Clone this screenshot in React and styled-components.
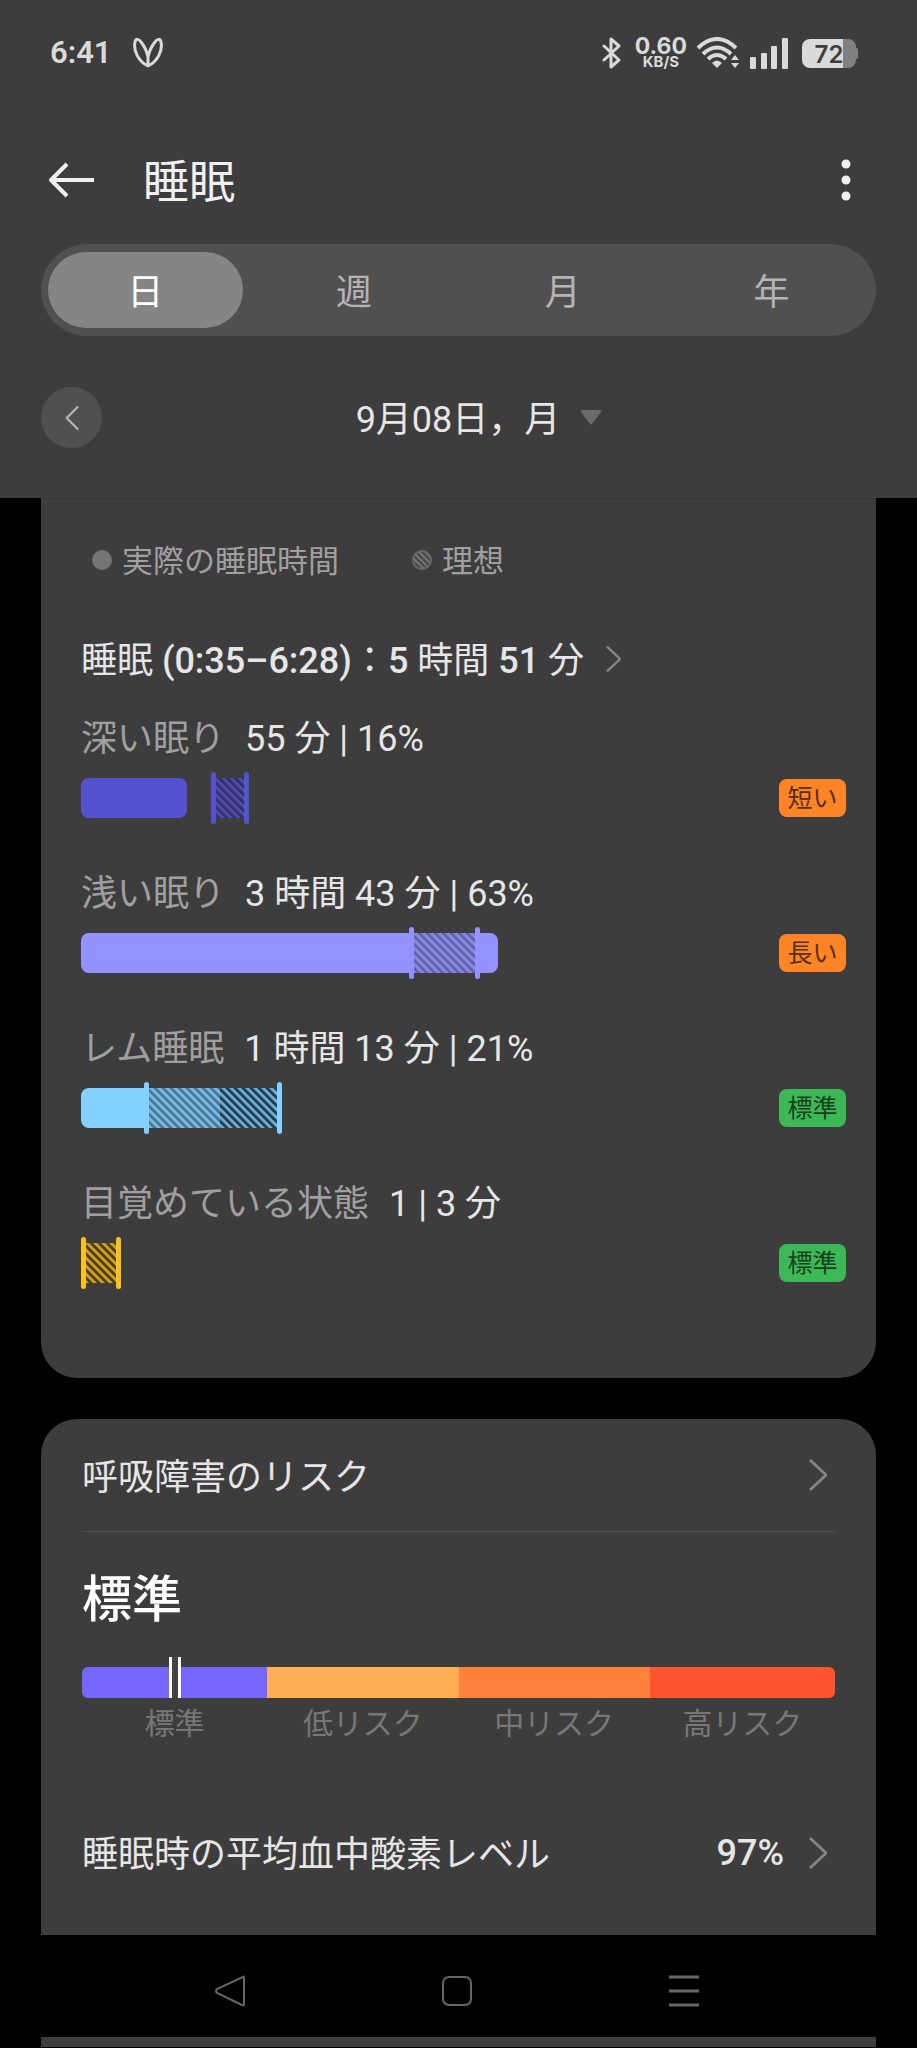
import React from "react";
import styled, { createGlobalStyle } from "styled-components";

const GlobalStyle = createGlobalStyle`
  * {
    box-sizing: border-box;
  }
  body {
    margin: 0;
    background: #000000;
    color: #e6e6e6;
    font-family: Roboto, "Noto Sans CJK JP", sans-serif;
    font-size: 36px;
    line-height: 52px;
  }
  button,
  a {
    font: inherit;
    color: inherit;
    text-decoration: none;
    border: none;
    background: none;
    padding: 0;
    cursor: pointer;
  }
  h1, h2, p {
    margin: 0;
    padding: 0;
    font-weight: 400;
  }
  svg {
    display: block;
    flex: none;
  }
`;

const STAGES = [
  {
    id: "deep",
    name: "深い眠り",
    value: "55 分 | 16%",
    color: "#5552d0",
    under: "#33325c",
    bar: 106,
    ideal: [130, 163],
    badge: "短い",
  },
  {
    id: "light",
    name: "浅い眠り",
    value: "3 時間 43 分 | 63%",
    color: "#9492fe",
    under: "#444368",
    bar: 417,
    ideal: [328, 394],
    badge: "長い",
  },
  {
    id: "rem",
    name: "レム睡眠",
    value: "1 時間 13 分 | 21%",
    color: "#84d0ff",
    under: "#243a4a",
    bar: 139,
    ideal: [63, 196],
    badge: "標準",
    ok: true,
  },
  {
    id: "awake",
    name: "目覚めている状態",
    value: "1 | 3 分",
    color: "#fcc21c",
    under: "#4a3c18",
    bar: 0,
    ideal: [0, 35],
    badge: "標準",
    ok: true,
  },
];

const RISKS = [
  { name: "標準", color: "#7466ff", size: 185 },
  { name: "低リスク", color: "#ffad52", size: 191 },
  { name: "中リスク", color: "#ff813a", size: 191 },
  { name: "高リスク", color: "#ff5430", size: 185 },
];

const Chevron = ({ width = 20, height = 34, left }) => (
  <svg width={width} height={height} viewBox="0 0 20 34" fill="none" stroke="currentColor" strokeWidth="3" strokeLinejoin="round">
    <path d={left ? "M18 2 3 17 18 32" : "M2 2 17 16Q18 17 17 18L2 32"} />
  </svg>
);

const StageChart = ({ id, color, under, bar, ideal }) => {
  const [from, to] = ideal;
  const hatch = `hatch-${id}`;
  const inBar = Math.max(0, Math.min(bar, to) - from - 3);
  return (
    <svg width="424" height="52" aria-hidden="true">
      <defs>
        <pattern id={hatch} width="8" height="8" patternUnits="userSpaceOnUse">
          <path d="M-2 -2 10 10M-2 6 2 10M6 -2 10 2" stroke={color} strokeWidth="3" strokeOpacity="0.75" />
        </pattern>
      </defs>
      {bar > 0 && <rect y="6" width={bar} height="40" rx="8" fill={color} />}
      <rect x={from + 3} y="6" width={to - from} height="40" fill={under} />
      {inBar > 0 && <rect x={from + 3} y="6" width={inBar} height="40" fill={color} fillOpacity="0.4" />}
      <rect x={from + 3} y="6" width={to - from} height="40" fill={`url(#${hatch})`} />
      <rect x={from} width="5" height="52" rx="2.5" fill={color} />
      <rect x={to} width="5" height="52" rx="2.5" fill={color} />
    </svg>
  );
};

const App = () => {
  return (
    <Page>
      <GlobalStyle />
      <Header>
        <StatusBar>
          <Clock>6:41</Clock>
          <svg width="32" height="32" viewBox="0 0 32 32" fill="none" stroke="#dadada" strokeWidth="3" strokeLinejoin="round">
            <path d="M16 29C7 25 1 14 3 5 4 1 7 2 9 5 13 10 15 15 16 20 17 15 19 10 23 5 25 2 28 1 29 5 31 14 25 25 16 29ZM16 18V29" />
          </svg>
          <StatusIcons>
            <svg width="19" height="32" viewBox="0 0 19 32" fill="none" stroke="#dadada" strokeWidth="3" strokeLinejoin="round" strokeLinecap="round">
              <path d="M2 9 17 23 9 30V2L17 9 2 23" />
            </svg>
            <Speed>
              <b>0.60</b>
              <span>KB/S</span>
            </Speed>
            <svg width="44" height="32" viewBox="0 0 44 32" fill="none" stroke="#dadada" strokeWidth="4">
              <path d="M2 11Q21-7 40 11M7 17Q21 4 35 17M12 22Q21 14 30 22" />
              <path d="M21 31 16 26Q21 21 26 26Z" fill="#dadada" stroke="none" />
              <path d="M35 23 39 18 43 23ZM35 26 39 31 43 26Z" fill="#dadada" stroke="none" />
            </svg>
            <svg width="40" height="32" viewBox="0 0 40 32" fill="#dadada">
              <rect x="1" y="20" width="6" height="12" rx="1" />
              <rect x="12" y="16" width="6" height="16" rx="1" />
              <rect x="22" y="9" width="6" height="23" rx="1" />
              <rect x="33" y="1" width="6" height="31" rx="1" />
            </svg>
            <Battery>72</Battery>
          </StatusIcons>
        </StatusBar>
        <TitleBar>
          <IconButton type="button" aria-label="戻る">
            <svg width="48" height="36" viewBox="0 0 48 36" fill="none" stroke="#f0f0f0" strokeWidth="4">
              <path d="M46 18H4M19 2 3 18 19 34" strokeLinejoin="round" />
            </svg>
          </IconButton>
          <Title>睡眠</Title>
          <IconButton type="button" aria-label="メニュー">
            <svg width="10" height="42" viewBox="0 0 10 42" fill="#f0f0f0">
              <circle cx="5" cy="5" r="4.5" />
              <circle cx="5" cy="21" r="4.5" />
              <circle cx="5" cy="37" r="4.5" />
            </svg>
          </IconButton>
        </TitleBar>
        <Tabs>
          <Tab type="button" $active>日</Tab>
          <Tab type="button">週</Tab>
          <Tab type="button">月</Tab>
          <Tab type="button">年</Tab>
        </Tabs>
        <DateRow>
          <RoundButton type="button" aria-label="前の日">
            <Chevron width={16} height={26} left />
          </RoundButton>
          <DateButton type="button">
            <Label>9月08日，月</Label>
            <svg width="22" height="15" viewBox="0 0 22 15" fill="#6b6b6b">
              <path d="M2 0H20Q22 0 21 2L12 14Q11 15 10 14L1 2Q0 0 2 0Z" />
            </svg>
          </DateButton>
        </DateRow>
      </Header>

      <SleepCard>
        <Legend>
          <LegendItem>
            <svg width="20" height="20"><circle cx="10" cy="10" r="10" fill="#757575" /></svg>
            <Label>実際の睡眠時間</Label>
          </LegendItem>
          <LegendItem>
            <svg width="20" height="20" viewBox="0 0 20 20">
              <defs>
                <clipPath id="legend-dot"><circle cx="10" cy="10" r="10" /></clipPath>
              </defs>
              <g clipPath="url(#legend-dot)">
                <rect width="20" height="20" fill="#484848" />
                <path d="M-9 -2 13 20M-3 -2 19 20M3 -2 25 20M9 -2 31 20M-15 -2 7 20" stroke="#767676" strokeWidth="2" />
                <circle cx="10" cy="10" r="9" fill="none" stroke="#666666" strokeWidth="2" />
              </g>
            </svg>
            <Label>理想</Label>
          </LegendItem>
        </Legend>
        <TotalLink href="#sleep">
          <Label>
            睡眠 <b>(0:35–6:28)</b>：<b>5</b> 時間 <b>51</b> 分
          </Label>
          <Chevron width={17} height={28} />
        </TotalLink>
        {STAGES.map((stage) => (
          <Stage key={stage.id}>
            <StageText>
              <StageName>{stage.name}</StageName>
              {stage.value}
            </StageText>
            <StageBar>
              <StageChart {...stage} />
              <Badge $ok={stage.ok}>{stage.badge}</Badge>
            </StageBar>
          </Stage>
        ))}
      </SleepCard>

      <RiskCard>
        <RowLink href="#risk" $divider>
          <RowName>呼吸障害のリスク</RowName>
          <Chevron />
        </RowLink>
        <RiskLevel>標準</RiskLevel>
        <RiskScale>
          {RISKS.map((risk, i) => (
            <RiskItem key={risk.name} $size={risk.size}>
              <RiskSegment $color={risk.color}>{i === 0 && <Marker />}</RiskSegment>
              {risk.name}
            </RiskItem>
          ))}
        </RiskScale>
        <RowLink href="#oxygen">
          <RowName>睡眠時の平均血中酸素レベル</RowName>
          <RowValue>97%</RowValue>
          <Chevron />
        </RowLink>
      </RiskCard>

      <NavBar>
        <NavButton type="button" aria-label="戻る">
          <svg width="32" height="32" viewBox="0 0 32 32" fill="none" stroke="#666666" strokeWidth="2">
            <path d="M29 2Q30 1 30 3V29Q30 31 28 30L3 18Q1 16 3 14Z" />
          </svg>
        </NavButton>
        <NavButton type="button" aria-label="ホーム">
          <svg width="32" height="32" viewBox="0 0 32 32" fill="none" stroke="#666666" strokeWidth="2">
            <rect x="2" y="2" width="28" height="28" rx="6" />
          </svg>
        </NavButton>
        <NavButton type="button" aria-label="履歴">
          <svg width="32" height="32" viewBox="0 0 32 32" stroke="#666666" strokeWidth="3">
            <path d="M1 2H31M1 16H31M1 30H31" />
          </svg>
        </NavButton>
      </NavBar>
      <NextCard />
    </Page>
  );
};

export default App;

const Page = styled.div`
  display: flex;
  flex-direction: column;
`;

const Header = styled.header`
  background: #3d3d3d;
  padding: 32px 41px 50px;
`;

const StatusBar = styled.div`
  display: flex;
  align-items: center;
  height: 42px;
  padding: 0 18px 0 9px;
`;

const Clock = styled.span`
  font-size: 31px;
  font-weight: 600;
  line-height: 42px;
  color: #dadada;
  margin-right: 20px;
`;

const StatusIcons = styled.div`
  display: flex;
  align-items: center;
  gap: 9px;
  margin-left: auto;
`;

const Speed = styled.div`
  display: flex;
  flex-direction: column;
  align-items: center;
  padding-left: 5px;
  font-family: Inter, sans-serif;
  color: #dadada;
  b {
    font-size: 23px;
    font-weight: 700;
    line-height: 18px;
  }
  span {
    font-size: 15px;
    font-weight: 700;
    line-height: 14px;
  }
`;

const Battery = styled.div`
  position: relative;
  width: 54px;
  height: 29px;
  margin: 0 2px 0 4px;
  border-radius: 8px;
  background: linear-gradient(to right, #dadada 41px, #808080 41px);
  font-family: Inter, sans-serif;
  font-size: 24px;
  font-weight: 600;
  line-height: 31px;
  text-align: center;
  color: #3d3d3d;
  &::after {
    content: "";
    position: absolute;
    right: -2px;
    top: 9px;
    width: 3px;
    height: 11px;
    border-radius: 2px;
    background: #808080;
  }
`;

const TitleBar = styled.div`
  display: flex;
  align-items: center;
  height: 132px;
  margin-top: 38px;
  padding: 4px 25px 0 7px;
`;

const IconButton = styled.button`
  display: flex;
`;

const Title = styled.h1`
  flex: 1;
  margin-left: 47px;
  padding-top: 4px;
  font-size: 46px;
  line-height: 68px;
  color: #f0f0f0;
`;

const Tabs = styled.div`
  display: flex;
  height: 92px;
  border-radius: 46px;
  background: #505050;
`;

const Tab = styled.button`
  flex: 1;
  margin: 8px 7px;
  padding-top: 6px;
  border-radius: 38px;
  background: ${({ $active }) => ($active ? "#858585" : "none")};
  color: ${({ $active }) => ($active ? "#ffffff" : "#b4b4b4")};
`;

const DateRow = styled.div`
  display: flex;
  align-items: center;
  margin-top: 51px;
  padding-right: 20px;
`;

const RoundButton = styled.button`
  display: flex;
  align-items: center;
  justify-content: center;
  width: 61px;
  height: 61px;
  border-radius: 50%;
  background: #505050;
  color: #b4b4b4;
`;

const DateButton = styled.button`
  display: flex;
  align-items: center;
  gap: 20px;
  margin: 0 auto;
`;

const Label = styled.span`
  padding-top: 4px;
  b {
    font-weight: 500;
  }
`;

const Card = styled.section`
  margin: 0 41px;
  background: #3d3d3d;
`;

const SleepCard = styled(Card)`
  padding: 33px 30px 45px 40px;
  border-top: 1px solid #373737;
  border-radius: 0 0 36px 36px;
`;

const Legend = styled.div`
  display: flex;
  gap: 73px;
  padding-left: 11px;
`;

const LegendItem = styled.div`
  display: flex;
  align-items: center;
  gap: 10px;
  font-size: 31px;
  color: #a0a0a0;
`;

const TotalLink = styled.a`
  display: flex;
  align-items: center;
  gap: 21px;
  margin: 43px 0 26px;
  svg {
    color: #858585;
  }
`;

const Stage = styled.div`
  padding-bottom: 44px;
`;

const StageText = styled.p`
  display: flex;
  gap: 20px;
`;

const StageName = styled.span`
  color: #a0a0a0;
`;

const StageBar = styled.div`
  display: flex;
  align-items: center;
  justify-content: space-between;
  margin-top: 7px;
`;

const Badge = styled.span`
  width: 67px;
  padding-top: 2px;
  border-radius: 8px;
  background: ${({ $ok }) => ($ok ? "#3cb956" : "#ff8426")};
  color: ${({ $ok }) => ($ok ? "#17401f" : "#54300f")};
  font-size: 25px;
  line-height: 36px;
  text-align: center;
`;

const RiskCard = styled(Card)`
  margin-top: 41px;
  padding: 0 41px 26px 41px;
  border-radius: 36px 36px 0 0;
`;

const RowLink = styled.a`
  display: flex;
  align-items: center;
  height: 113px;
  padding-right: 7px;
  border-bottom: ${({ $divider }) => ($divider ? "1px solid #4f4f4f" : "none")};
  svg {
    color: #858585;
  }
`;

const RowName = styled.span`
  flex: 1;
  padding-top: 5px;
`;

const RowValue = styled.span`
  font-weight: 500;
  margin-right: 24px;
`;

const RiskLevel = styled.h2`
  margin-top: 32px;
  font-size: 50px;
  font-weight: 500;
  line-height: 72px;
  color: #ffffff;
`;

const RiskScale = styled.div`
  display: flex;
  margin: 31px 0 46px;
`;

const RiskItem = styled.div`
  flex: ${({ $size }) => $size};
  font-size: 30px;
  text-align: center;
  color: #777777;
`;

const RiskSegment = styled.div`
  position: relative;
  height: 31px;
  background: ${({ $color }) => $color};
  ${RiskItem}:first-child & {
    border-radius: 6px 0 0 6px;
  }
  ${RiskItem}:last-child & {
    border-radius: 0 6px 6px 0;
  }
`;

const Marker = styled.span`
  position: absolute;
  left: calc(50% - 6px);
  bottom: 0;
  width: 12px;
  height: 41px;
  border: solid #ffffff;
  border-width: 0 3px;
  background: #444444;
`;

const NavBar = styled.nav`
  display: flex;
  height: 102px;
  padding: 9px 120px 0 117px;
`;

const NavButton = styled.button`
  display: flex;
  flex: 1;
  align-items: center;
  justify-content: center;
`;

const NextCard = styled(Card)`
  height: 10px;
`;
